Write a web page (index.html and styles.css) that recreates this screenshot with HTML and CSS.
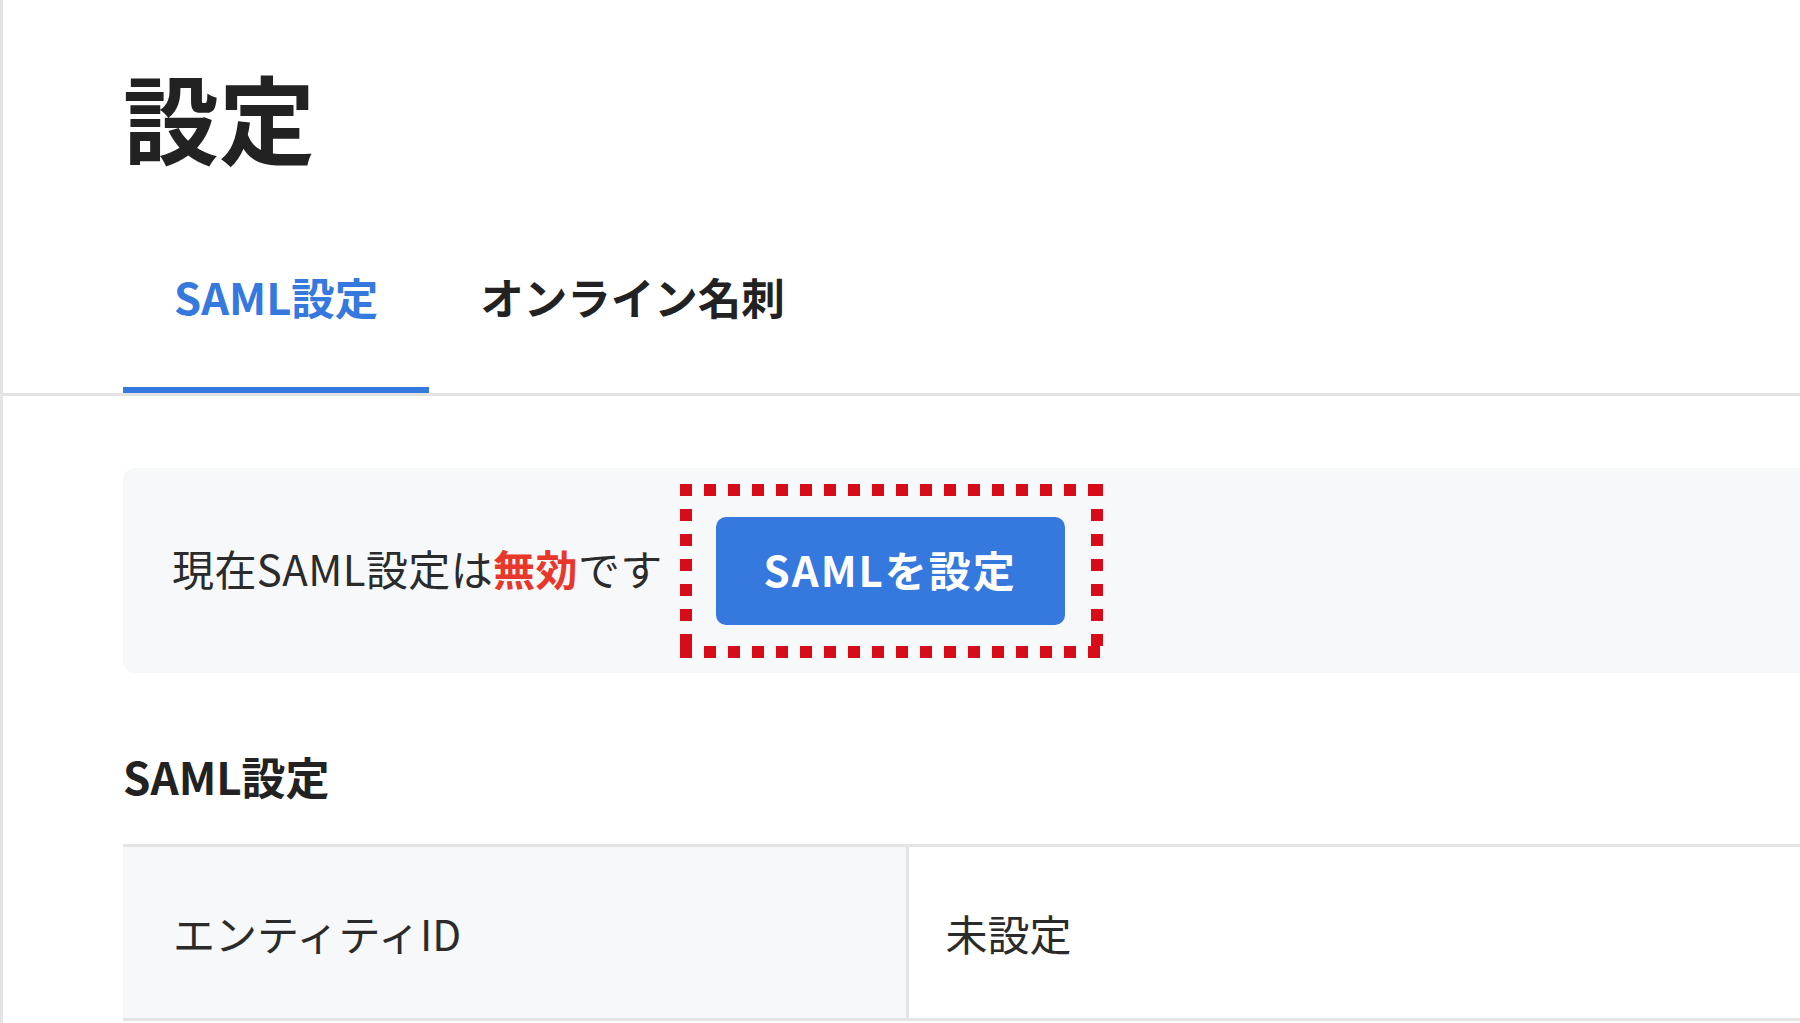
FILE: index.html
```html
<!DOCTYPE html>
<html lang="ja">
<head>
<meta charset="utf-8">
<title>設定</title>
<link rel="stylesheet" href="styles.css">
</head>
<body>
<div class="page">
  <h1 class="title">設定</h1>
  <nav class="tabs">
    <a class="tab tab-active">SAML設定</a>
    <a class="tab">オンライン名刺</a>
  </nav>
  <section class="content">
    <div class="status">
      <p class="status-text">現在SAML設定は<strong class="status-off">無効</strong>です</p>
      <div class="highlight">
        <button class="btn-primary" type="button">SAMLを設定</button>
      </div>
    </div>
    <h2 class="section-title">SAML設定</h2>
    <table class="info-table">
      <tr>
        <th class="info-label">エンティティID</th>
        <td class="info-value">未設定</td>
      </tr>
    </table>
  </section>
</div>
</body>
</html>
```
FILE: styles.css
```css
* { box-sizing: border-box; }
html, body {
  margin: 0;
  padding: 0;
  background: #ffffff;
  overflow: hidden;
}
body {
  font-family: "Noto Sans CJK JP", "Noto Sans", "Liberation Sans", sans-serif;
  color: #222222;
}
.page {
  min-height: 1023px;
  border-left: 3px solid #e4e4e4;
}
.title {
  margin: 0;
  padding: 68px 0 0 120px;
  font-size: 96px;
  line-height: 96px;
  font-weight: 700;
  color: #222222;
}
.tabs {
  display: flex;
  margin-top: 73px;
  padding-left: 120px;
  border-bottom: 3px solid #e2e2e2;
}
.tab {
  display: block;
  padding: 38px 51px 68px;
  font-size: 43.5px;
  line-height: 44px;
  font-weight: 700;
  color: #222222;
  border-bottom: 6px solid transparent;
}
.tab-active {
  color: #3578de;
  border-bottom-color: #3578de;
}
.content {
  padding: 72px 0 0 120px;
}
.status {
  display: flex;
  align-items: center;
  gap: 17px;
  height: 205px;
  padding-left: 49px;
  background: #f7f8f9;
  border-radius: 12px 0 0 12px;
}
.status-text {
  margin: 0 0 5px;
  font-size: 42px;
  line-height: 42px;
  letter-spacing: 0.4px;
  color: #2b2b2b;
}
.status-off {
  color: #e8382b;
  font-weight: 700;
}
.highlight {
  padding: 33px 38px 33px 36px;
  background:
    repeating-linear-gradient(to right, #d70c18 0 12px, transparent 12px 24px) left top / 100% 12px no-repeat,
    repeating-linear-gradient(to right, #d70c18 0 12px, transparent 12px 24px) left bottom / 100% 12px no-repeat,
    repeating-linear-gradient(to bottom, #d70c18 0 12px, transparent 12px 25px) left top / 12px 100% no-repeat,
    repeating-linear-gradient(to bottom, #d70c18 0 12px, transparent 12px 25px) right top / 12px 100% no-repeat;
}
.btn-primary {
  display: flex;
  align-items: center;
  justify-content: center;
  width: 349px;
  height: 108px;
  padding: 0 0 5px;
  border: 0;
  border-radius: 10px;
  background: #3578de;
  color: #ffffff;
  font-family: inherit;
  font-size: 42px;
  font-weight: 700;
  letter-spacing: 2px;
}
.section-title {
  margin: 81px 0 0;
  font-size: 44px;
  line-height: 44px;
  font-weight: 700;
  color: #222222;
}
.info-table {
  width: 100%;
  margin-top: 46px;
  border-collapse: collapse;
  border-top: 3px solid #e4e4e4;
  border-bottom: 3px solid #e4e4e4;
}
.info-label,
.info-value {
  height: 174px;
  font-size: 42px;
  font-weight: 400;
  color: #2b2b2b;
  text-align: left;
  vertical-align: middle;
}
.info-label {
  width: 784px;
  padding: 0 0 0 50px;
  background: #f7f8f9;
  border-right: 3px solid #e4e4e4;
}
.info-value {
  padding: 0 0 0 37px;
}
```
